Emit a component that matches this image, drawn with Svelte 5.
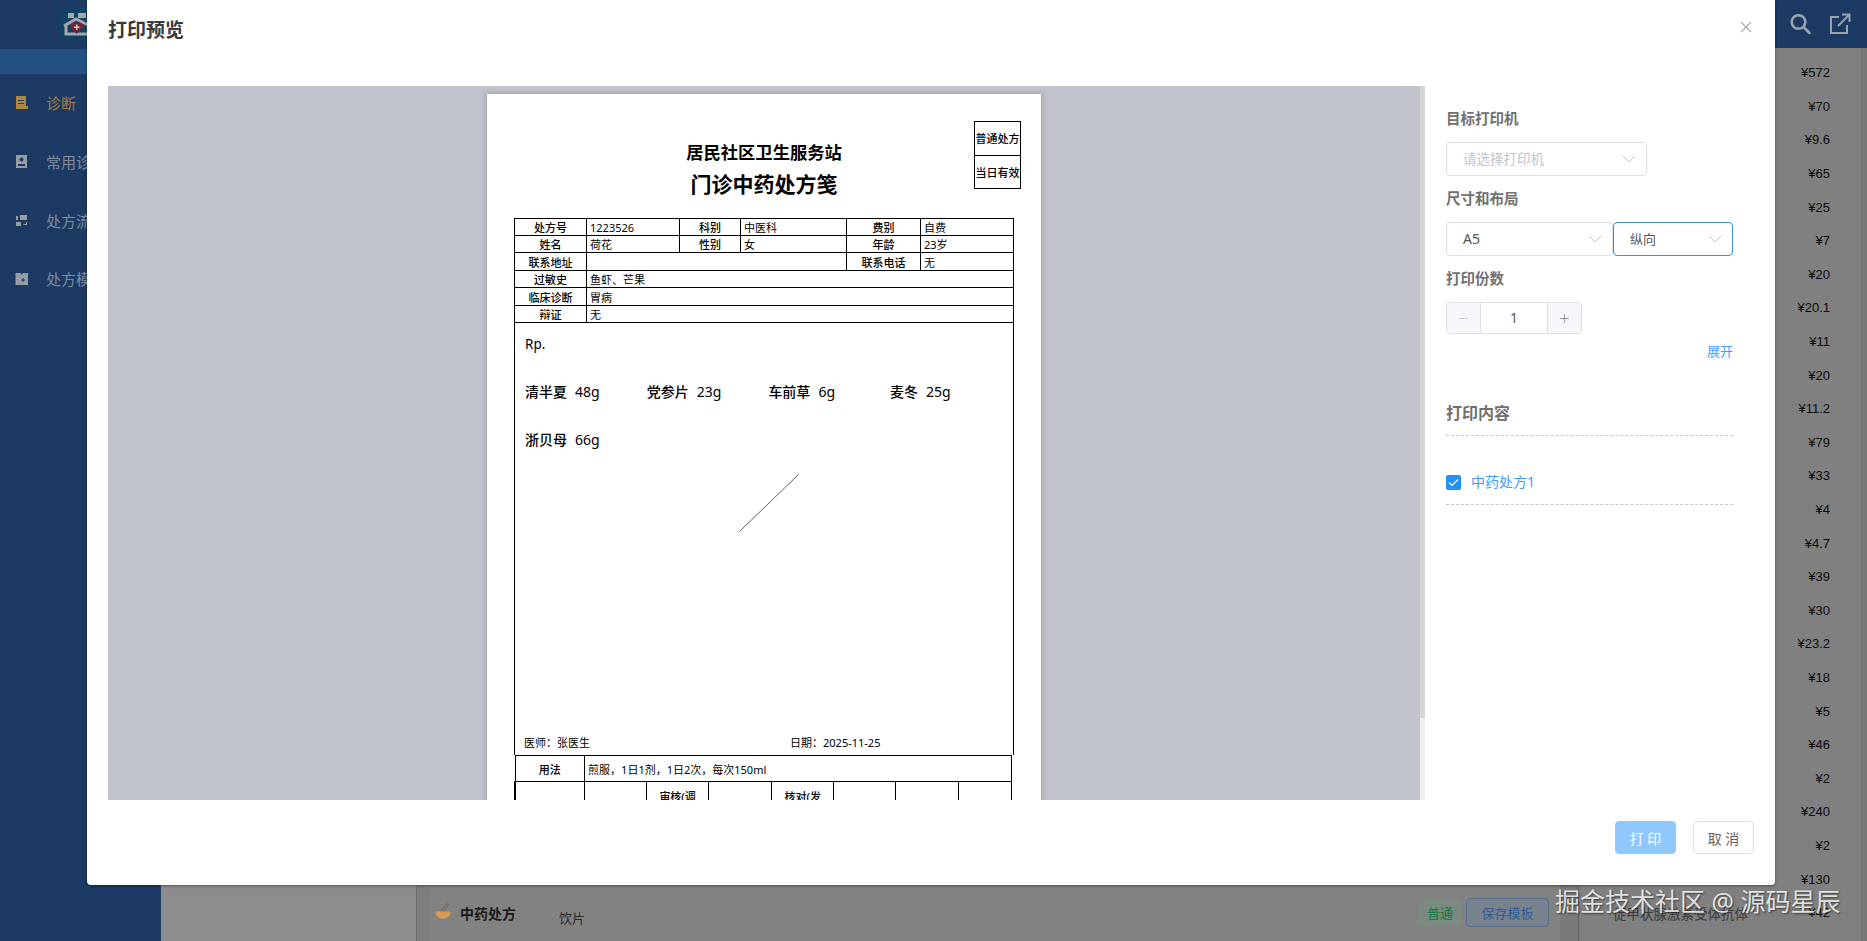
<script>
	const prices = ['572', '70', '9.6', '65', '25', '7', '20', '20.1', '11', '20', '11.2', '79', '33', '4', '4.7', '39', '30', '23.2', '18', '5', '46', '2', '240', '2', '130', '42'];
	const menu = [
		{ label: '诊断', active: true, icon: 'M1 0h10v13H1z M3 4h6v1H3z M3 7h6v1H3z M11 10h2v3h-2z' },
		{ label: '常用诊断', icon: 'M1 0h11v13H1z M6.500 2.500a2 2 0 1 0 .01 0z M3 9h7v2H3z' },
		{ label: '处方流转', icon: 'M5 1h7v5H5z M1 8h5v4H1z M1 2h2v4H1z M11 8h1v3H8.500v-1H11z' },
		{ label: '处方模板', icon: 'M0.500 1h5l1 1.500L8 1h5v12H0.500z M6 7.500h1.500V6h1v1.500H10v1H8.500V10h-1V8.500H6z' }
	];
	const herbs = [
		{ name: '清半夏', dose: '48g' },
		{ name: '党参片', dose: '23g' },
		{ name: '车前草', dose: '6g' },
		{ name: '麦冬', dose: '25g' },
		{ name: '浙贝母', dose: '66g' }
	];
</script>

<div class="page">
	<aside class="sidebar">
		<div class="logo-row">
			<svg class="logo" width="36" height="32" viewBox="0 0 36 32">
				<rect width="36" height="32" rx="6" fill="#0e4366" />
				<rect x="8" y="5" width="6" height="5" fill="#a6a8ab" />
				<rect x="18" y="5" width="8" height="5" fill="#a6a8ab" />
				<path d="M4 18 L16 11 L30 18 M6 16 V26 H30" fill="none" stroke="#a6a8ab" stroke-width="3" />
				<path d="M16.700 26 L11 20 a3.300 3.300 0 0 1 5.700 -4 a3.300 3.300 0 0 1 5.700 4 z" fill="#7a2338" />
				<path d="M16 16.500h1.500v2h2v1.500h-2v2H16v-2h-2v-1.500h2z" fill="#c9c9cf" />
			</svg>
		</div>
		<div class="strip"></div>
		{#each menu as item}
			<div class="menu-item" class:active={item.active}>
				<svg width="14" height="14" viewBox="0 0 14 14"><path d={item.icon} fill="currentColor" fill-rule="evenodd" /></svg>
				<span>{item.label}</span>
			</div>
		{/each}
	</aside>

	<main class="main">
		<header class="topbar">
			<svg width="24" height="24" viewBox="0 0 24 24" fill="none" stroke="#98a3b0" stroke-width="2.6">
				<circle cx="10.500" cy="10" r="6.800" />
				<path d="M15.500 15l6 6" stroke-linecap="round" />
			</svg>
			<svg width="24" height="24" viewBox="0 0 24 24" fill="none" stroke="#98a3b0" stroke-width="2">
				<path d="M11 5H3v16h16v-8" />
				<path d="M10 14L21 3M14 2.500h7.500V10" />
			</svg>
		</header>
		<div class="content">
			<div class="left-panel"></div>
			<div class="center">
				<div class="center-inner">
					<div class="order-row">
						<svg class="mortar" width="16" height="16" viewBox="0 0 16 16">
							<path d="M0.500 8.500h15c0 4.500-3 7-7.500 7s-7.500-2.500-7.500-7z" fill="#d69a52" />
							<path d="M6 8l5.500-7c1-.8 2.500 0 1.800 1.300L9 8" fill="none" stroke="#6f6a60" stroke-width="1" />
						</svg>
						<span class="order-title">中药处方</span>
						<span class="order-kind">饮片</span>
						<span class="tag">普通</span>
						<button class="save">保存模板</button>
					</div>
				</div>
			</div>
			<div class="price-list">
				{#each prices as price, i}
					<div class="price-row">
						<span class="drug">{i === prices.length - 1 ? '促甲状腺激素受体抗体' : ''}</span>
						<span>¥{price}</span>
					</div>
				{/each}
			</div>
			<div class="page-scroll"></div>
		</div>
	</main>

	<div class="modal">
		<div class="modal-head">
			<h2>打印预览</h2>
			<svg class="close" width="12" height="12" viewBox="0 0 12 12" stroke="#a8a8a8" stroke-width="1.100"><path d="M1 1l10 10M11 1L1 11" /></svg>
		</div>
		<div class="modal-body">
			<div class="preview">
				<div class="paper">
					<div class="paper-head">
						<div></div>
						<div class="titles">
							<div class="org">居民社区卫生服务站</div>
							<div class="doc-title">门诊中药处方笺</div>
						</div>
						<div class="stamp">
							<div>普通处方</div>
							<div>当日有效</div>
						</div>
					</div>

					<table class="info">
						<colgroup>
							<col style="width:72px" /><col style="width:93px" /><col style="width:61px" /><col style="width:106px" /><col style="width:74px" /><col />
						</colgroup>
						<tbody>
							<tr class="h17"><th>处方号</th><td>1223526</td><th>科别</th><td>中医科</td><th>费别</th><td>自费</td></tr>
							<tr class="h17"><th>姓名</th><td>荷花</td><th>性别</th><td>女</td><th>年龄</th><td>23岁</td></tr>
							<tr class="h18"><th>联系地址</th><td colspan="3"></td><th>联系电话</th><td>无</td></tr>
							<tr class="h17"><th>过敏史</th><td colspan="5">鱼虾、芒果</td></tr>
							<tr class="h18"><th>临床诊断</th><td colspan="5">胃病</td></tr>
							<tr class="h17"><th>辩证</th><td colspan="5">无</td></tr>
						</tbody>
					</table>

					<div class="rx">
						<div class="rp">Rp.</div>
						<div class="herbs">
							{#each herbs as herb}
								<div class="herb"><b>{herb.name}</b><span>{herb.dose}</span></div>
							{/each}
						</div>
						<svg class="slash" width="60" height="58" viewBox="0 0 60 58"><path d="M0.500 57.500L59.500 0.500" stroke="#333" stroke-width="0.800" /></svg>
						<div class="sign">
							<span class="doctor">医师：张医生</span>
							<span>日期：<i>2025-11-25</i></span>
						</div>
					</div>

					<table class="usage">
						<colgroup>
							<col style="width:69.600px" /><col style="width:62px" /><col style="width:62px" /><col style="width:63.400px" /><col style="width:61.700px" /><col style="width:62.300px" /><col style="width:62.800px" /><col />
						</colgroup>
						<tbody>
							<tr class="use-row"><th>用法</th><td colspan="7">煎服，1日1剂，1日2次，每次150ml</td></tr>
							<tr class="sign-row">
								<th>医师</th><th>张医生</th>
								<th>审核(调<br />配)</th><td></td>
								<th>核对(发<br />药)</th><td></td>
								<th>金额</th><td></td>
							</tr>
						</tbody>
					</table>
				</div>
			</div>
			<div class="track"><div class="thumb"></div></div>

			<section class="settings">
				<div class="label">目标打印机</div>
				<div class="select printer">
					<span class="placeholder">请选择打印机</span>
					<svg width="14" height="8" viewBox="0 0 14 8" fill="none" stroke="#c0c4cc"><path d="M1 1l6 6 6-6" /></svg>
				</div>
				<div class="label">尺寸和布局</div>
				<div class="select-pair">
					<div class="select size">
						<span>A5</span>
						<svg width="14" height="8" viewBox="0 0 14 8" fill="none" stroke="#c0c4cc"><path d="M1 1l6 6 6-6" /></svg>
					</div>
					<div class="select layout">
						<span>纵向</span>
						<svg width="14" height="8" viewBox="0 0 14 8" fill="none" stroke="#c0c4cc"><path d="M1 1l6 6 6-6" /></svg>
					</div>
				</div>
				<div class="label">打印份数</div>
				<div class="stepper">
					<span class="step off">−</span>
					<span class="count">1</span>
					<span class="step">+</span>
				</div>
				<div class="expand">展开</div>

				<h3>打印内容</h3>
				<div class="check-row">
					<span class="checkbox">
						<svg width="11" height="9" viewBox="0 0 11 9" fill="none" stroke="#fff" stroke-width="1.200"><path d="M1 4.500l3 3 6-6" /></svg>
					</span>
					<span>中药处方1</span>
				</div>
			</section>
		</div>
		<div class="modal-foot">
			<button class="btn primary">打 印</button>
			<button class="btn">取 消</button>
		</div>
	</div>

	<div class="watermark">掘金技术社区 @ 源码星辰</div>
</div>

<style>
	:global(body) {
		margin: 0;
		overflow: hidden;
	}

	.page {
		position: relative;
		display: grid;
		grid-template-columns: 161px 1fr;
		width: 1867px;
		height: 941px;
		overflow: hidden;
		background: #808080;
		font-family: 'Noto Sans', 'Noto Sans CJK SC', sans-serif;
		color: #111;
	}

	.sidebar {
		background: #1c3a63;
	}

	.logo-row {
		height: 49px;
		padding: 8px 0 0 60px;
		box-sizing: border-box;
	}

	.logo {
		display: block;
	}

	.strip {
		height: 25px;
		background: #215083;
	}

	.menu-item {
		display: flex;
		align-items: center;
		gap: 17px;
		height: 58.700px;
		padding-left: 15px;
		font-size: 15px;
		color: #7f8c9c;
		white-space: nowrap;
	}

	.menu-item span {
		margin-top: -1px;
	}

	.menu-item svg {
		color: #979da5;
	}

	.menu-item.active {
		color: #a07f43;
	}

	.menu-item.active svg {
		color: #ab8a42;
	}

	.main {
		display: flex;
		flex-direction: column;
		min-width: 0;
	}

	.topbar {
		display: flex;
		justify-content: flex-end;
		align-items: center;
		gap: 16px;
		height: 48px;
		padding-right: 15px;
		background: #1c3a63;
		flex: none;
	}

	.content {
		display: flex;
		flex: 1;
		min-height: 0;
	}

	.left-panel {
		width: 255px;
		flex: none;
		background: #8d8d8d;
		border-right: 1px solid #6d6d6d;
	}

	.center {
		width: 1161px;
		flex: none;
		padding-left: 12px;
		box-sizing: border-box;
		background: #7e7e7e;
	}

	.center-inner {
		display: flex;
		flex-direction: column;
		justify-content: flex-end;
		height: 100%;
		background: #828282;
		border-right: 18px solid #7a7a7a;
		box-sizing: border-box;
	}

	.order-row {
		display: flex;
		align-items: center;
		height: 29px;
		padding: 0 11px 14px 6px;
	}

	.mortar {
		margin-top: -4px;
	}

	.order-title {
		margin-left: 9px;
		font-size: 14px;
		font-weight: 700;
		color: #1b1b1b;
	}

	.order-kind {
		margin-left: 43px;
		padding-top: 10px;
		font-size: 13px;
		color: #2a2a2a;
	}

	.tag {
		margin-left: auto;
		width: 44px;
		height: 26px;
		line-height: 26px;
		text-align: center;
		border-radius: 3px;
		background: #7b8a80;
		color: #0f7a3e;
		font-size: 13px;
	}

	.save {
		margin-left: 4px;
		width: 83px;
		height: 29px;
		padding: 0;
		border: 1px solid #566f8f;
		border-radius: 4px;
		background: #79838f;
		color: #2f5d93;
		font: inherit;
		font-size: 13px;
	}

	.price-list {
		flex: 1;
		padding-top: 8px;
		font-family: 'Liberation Sans', Arial, sans-serif;
		font-size: 13px;
		color: #0c0c0c;
		border-left: 1px solid #5f5f5f;
	}

	.price-row {
		display: flex;
		justify-content: space-between;
		align-items: center;
		height: 33.600px;
		padding: 0 31px 0 34px;
	}

	.drug {
		font-family: 'Noto Sans CJK SC', sans-serif;
		color: #3c3c3c;
		font-size: 13.500px;
	}

	.page-scroll {
		width: 6px;
		flex: none;
		background: #777;
	}

	.modal {
		position: absolute;
		left: 87px;
		top: 0;
		width: 1688px;
		height: 885px;
		display: flex;
		flex-direction: column;
		background: #fff;
		border-radius: 0 0 4px 4px;
		box-shadow: 0 1px 3px rgba(0, 0, 0, 0.4);
	}

	.modal-head {
		display: flex;
		justify-content: space-between;
		align-items: flex-start;
		height: 86px;
		padding: 0 23px 0 21px;
		box-sizing: border-box;
		flex: none;
	}

	h2 {
		margin: 16px 0 0;
		font-size: 19px;
		line-height: 28px;
		font-weight: 700;
		color: #3a3a3a;
	}

	.close {
		margin-top: 21px;
	}

	.modal-body {
		display: flex;
		height: 714px;
		flex: none;
		padding-left: 21px;
	}

	.preview {
		width: 1312px;
		flex: none;
		overflow: hidden;
		background: #c0c3cb;
	}

	.paper {
		width: 554px;
		height: 1200px;
		margin: 8px auto 0;
		padding: 27px 27px 0;
		box-sizing: border-box;
		background: #fff;
		box-shadow: 0 0 4px 2px rgba(0, 0, 0, 0.12);
		color: #000;
	}

	.paper-head {
		display: grid;
		grid-template-columns: 1fr auto 1fr;
		height: 79px;
		margin: 0 -7px 18px 0;
	}

	.titles {
		text-align: center;
		padding-top: 20px;
		white-space: nowrap;
		transform: translateX(-3.500px);
	}

	.org {
		font-size: 17.300px;
		line-height: 24px;
		font-weight: 700;
	}

	.doc-title {
		margin-top: 4px;
		font-size: 21px;
		line-height: 30px;
		font-weight: 700;
	}

	.stamp {
		justify-self: end;
		width: 47px;
		height: 68px;
		box-sizing: border-box;
		border: 1px solid #000;
		font-size: 11px;
		line-height: 33px;
		text-align: center;
		white-space: nowrap;
		font-weight: 500;
	}

	.stamp div + div {
		border-top: 1px solid #000;
	}

	table {
		border-collapse: collapse;
		table-layout: fixed;
	}

	th,
	td {
		border: 1px solid #000;
		padding: 0;
		font-size: 11px;
		overflow: hidden;
		white-space: nowrap;
	}

	th {
		font-weight: 500;
		text-align: center;
	}

	td {
		padding-left: 3px;
		font-weight: 400;
	}

	.info {
		width: 500px;
	}

	.h17 {
		height: 17px;
	}

	.h18 {
		height: 18px;
	}

	.rx {
		display: flex;
		flex-direction: column;
		width: 500px;
		height: 433px;
		box-sizing: border-box;
		margin-top: -1px;
		padding: 11px 9px 4px 9px;
		border: 1px solid #000;
		border-bottom: 0;
	}

	.rp {
		font-size: 13.500px;
		line-height: 20px;
		padding-left: 1px;
	}

	.herbs {
		display: grid;
		grid-template-columns: repeat(4, 121.700px);
		grid-auto-rows: 48px;
		margin-top: 13px;
		padding-left: 1px;
	}

	.herb {
		display: flex;
		align-items: center;
		gap: 8px;
		font-size: 14px;
	}

	.herb b {
		font-weight: 500;
	}

	.slash {
		margin: 11px 0 0 215px;
		flex: none;
	}

	.sign {
		display: flex;
		margin-top: auto;
		font-size: 11px;
		line-height: 16px;
	}

	.doctor {
		width: 266px;
	}

	.sign i {
		font-style: normal;
	}

	.usage {
		width: 498px;
	}

	.use-row {
		height: 26px;
	}

	.sign-row {
		height: 50px;
	}

	.sign-row th {
		line-height: 15px;
		vertical-align: top;
		padding-top: 7px;
	}

	.sign-row th:first-child {
		border-left-width: 2px;
		padding-top: 16px;
	}

	.sign-row th:nth-child(2),
	.sign-row th:nth-child(7) {
		padding-top: 16px;
	}

	.track {
		width: 5px;
		flex: none;
		background: #f0f0f2;
	}

	.thumb {
		height: 632px;
		background: #d5d6d8;
	}

	.settings {
		flex: 1;
		padding: 22px 42px 0 21px;
		color: #666;
	}

	.label {
		margin-top: -1px;
		padding-bottom: 1px;
		font-size: 14.500px;
		line-height: 22px;
		font-weight: 700;
		color: #707070;
	}

	.select {
		display: flex;
		justify-content: space-between;
		align-items: center;
		height: 34px;
		box-sizing: border-box;
		margin: 12px 0;
		padding: 0 10px 0 16px;
		border: 1px solid #dcdfe6;
		border-radius: 4px;
		font-size: 14px;
		color: #555;
	}

	.select span {
		margin-top: -2px;
	}

	.printer {
		width: 201px;
	}

	.placeholder {
		font-size: 13.500px;
		color: #c0c4cc;
	}

	.select-pair {
		display: flex;
	}

	.size {
		width: 167px;
	}

	.layout {
		width: 120px;
		border-color: #3a8fd9;
		font-size: 13px;
		padding-left: 16px;
	}

	.stepper {
		display: flex;
		width: 136px;
		height: 32px;
		margin-top: 12px;
		box-sizing: border-box;
		border: 1px solid #dcdfe6;
		border-radius: 4px;
		overflow: hidden;
	}

	.step {
		width: 33px;
		background: #f5f7fa;
		text-align: center;
		font-size: 18px;
		font-weight: 300;
		line-height: 30px;
		color: #8a8f99;
		flex: none;
	}

	.step.off {
		color: #c0c4cc;
	}

	.count {
		flex: 1;
		border-left: 1px solid #dcdfe6;
		border-right: 1px solid #dcdfe6;
		text-align: center;
		font-size: 14px;
		line-height: 30px;
		color: #555;
	}

	.expand {
		margin-top: 7px;
		padding-bottom: 1px;
		text-align: right;
		font-size: 13px;
		line-height: 20px;
		color: #409eff;
	}

	h3 {
		margin: 39px 0 0;
		padding-bottom: 10px;
		font-size: 16px;
		line-height: 24px;
		font-weight: 700;
		color: #707070;
		border-bottom: 1px dashed #c8c8c8;
	}

	.check-row {
		display: flex;
		align-items: center;
		gap: 10px;
		height: 20px;
		margin-top: 36px;
		padding-bottom: 12px;
		border-bottom: 1px dashed #c8c8c8;
		font-size: 14px;
		color: #409eff;
		box-sizing: content-box;
	}

	.check-row span:last-child {
		margin-top: -2px;
	}

	.checkbox {
		display: flex;
		justify-content: center;
		align-items: center;
		width: 15px;
		height: 15px;
		border-radius: 2px;
		background: #2291f5;
	}

	.modal-foot {
		display: flex;
		justify-content: flex-end;
		gap: 17px;
		padding: 21px 21px 0 0;
	}

	.btn {
		width: 61px;
		height: 33px;
		padding: 0;
		border: 1px solid #dcdfe6;
		border-radius: 4px;
		background: #fff;
		color: #606266;
		font: inherit;
		font-size: 14px;
	}

	.btn.primary {
		border-color: #8fc7ff;
		background: #8fc7ff;
		color: #fff;
	}

	.watermark {
		position: absolute;
		left: 1555px;
		top: 883px;
		font-size: 25px;
		line-height: 36px;
		white-space: nowrap;
		color: rgba(255, 255, 255, 0.82);
		text-shadow: 1px 1px 2px rgba(0, 0, 0, 0.55);
	}
</style>
